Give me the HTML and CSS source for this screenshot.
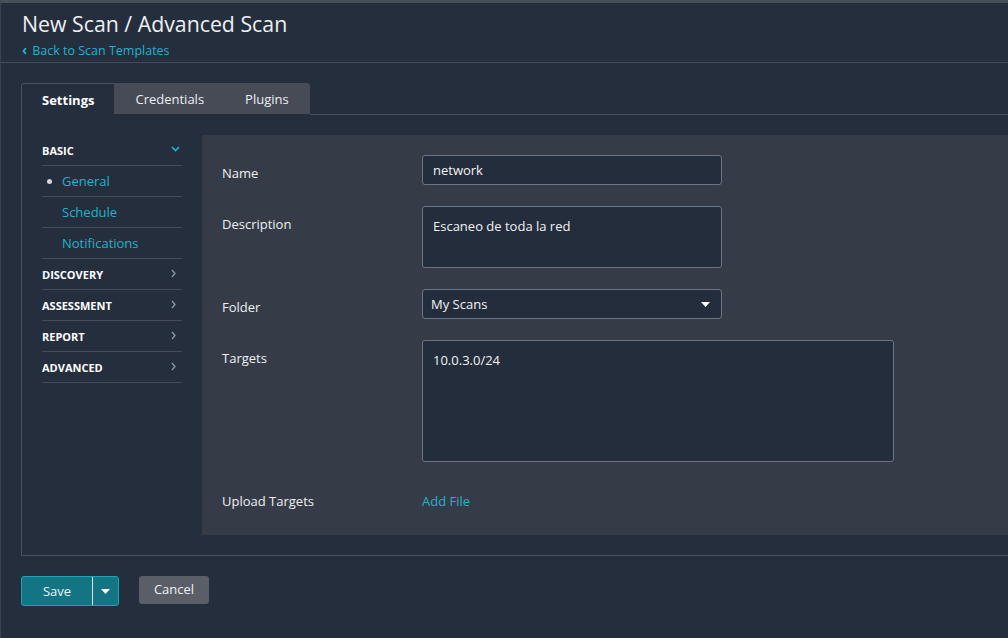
FILE: index.html
```html
<!DOCTYPE html>
<html>
<head>
<meta charset="utf-8">
<link rel="stylesheet" href="styles.css">
</head>
<body>
<header class="header">
  <h1 class="title">New Scan / Advanced Scan</h1>
  <a class="back"><span class="back-caret">&#8249;</span>Back to Scan Templates</a>
</header>
<main class="main">
  <div class="tabs">
    <div class="tab active">Settings</div>
    <div class="tab">Credentials</div>
    <div class="tab last">Plugins</div>
    <div class="tab-fill"></div>
  </div>
  <div class="content">
    <nav class="sidenav">
      <div class="nav-head">BASIC
        <svg class="chev-down" width="9" height="6" viewBox="0 0 9 6"><path d="M1 1 L4.5 4.5 L8 1" fill="none" stroke="#1fb3cc" stroke-width="1.6"/></svg>
      </div>
      <div class="nav-item current"><span class="dot"></span>General</div>
      <div class="nav-item">Schedule</div>
      <div class="nav-item">Notifications</div>
      <div class="nav-head">DISCOVERY<svg class="chev" width="5" height="9" viewBox="0 0 5 9"><path d="M1 1 L4 4.5 L1 8" fill="none" stroke="#8898ad" stroke-width="1.3"/></svg></div>
      <div class="nav-head">ASSESSMENT<svg class="chev" width="5" height="9" viewBox="0 0 5 9"><path d="M1 1 L4 4.5 L1 8" fill="none" stroke="#8898ad" stroke-width="1.3"/></svg></div>
      <div class="nav-head">REPORT<svg class="chev" width="5" height="9" viewBox="0 0 5 9"><path d="M1 1 L4 4.5 L1 8" fill="none" stroke="#8898ad" stroke-width="1.3"/></svg></div>
      <div class="nav-head">ADVANCED<svg class="chev" width="5" height="9" viewBox="0 0 5 9"><path d="M1 1 L4 4.5 L1 8" fill="none" stroke="#8898ad" stroke-width="1.3"/></svg></div>
    </nav>
    <section class="panel">
      <div class="row">
        <label class="label">Name</label>
        <div class="input">network</div>
      </div>
      <div class="row">
        <label class="label">Description</label>
        <div class="input textarea">Escaneo de toda la red</div>
      </div>
      <div class="row">
        <label class="label">Folder</label>
        <div class="input select">My Scans
          <svg class="caret" width="9" height="5" viewBox="0 0 9 5"><path d="M0 0 H9 L4.5 5 Z" fill="#ffffff"/></svg>
        </div>
      </div>
      <div class="row">
        <label class="label">Targets</label>
        <div class="input textarea big">10.0.3.0/24</div>
      </div>
      <div class="row upload">
        <label class="label">Upload Targets</label>
        <a class="addfile">Add File</a>
      </div>
    </section>
  </div>
  <div class="actions">
    <div class="save-group">
      <div class="save">Save</div>
      <div class="save-drop"><svg width="9" height="5" viewBox="0 0 9 5"><path d="M0 0 H9 L4.5 5 Z" fill="#ffffff"/></svg></div>
    </div>
    <div class="cancel">Cancel</div>
  </div>
</main>
</body>
</html>
```

FILE: styles.css
```css
* { box-sizing: border-box; }
html, body { margin: 0; padding: 0; }
body {
  width: 1008px;
  height: 638px;
  overflow: hidden;
  background: #252e3d;
  border-top: 3px solid #474f58;
  border-left: 1px solid #3a424f;
  font-family: "Open Sans", "Noto Sans", sans-serif;
  color: #e8ebef;
}
.header {
  height: 60px;
  padding: 6px 21px 0;
  border-bottom: 1px solid #444b56;
}
.title {
  margin: 0;
  font-size: 21.3px;
  line-height: 30px;
  font-weight: 400;
  color: #eef0f3;
}
.back {
  display: block;
  margin-top: 2px;
  font-size: 12.5px;
  line-height: 18px;
  height: 18px;
  color: #22b2cc;
}
.back-caret {
  font-weight: 700;
  font-size: 14px;
  line-height: 18px;
  margin-right: 5px;
}
.main {
  padding: 20px 0 0 20px;
}
.tabs {
  display: flex;
  height: 32px;
}
.tab {
  height: 31px;
  padding: 0 20px 0 21px;
  background: #464b55;
  font-size: 13px;
  line-height: 33px;
  color: #eceef1;
}
.tab.last { border-top-right-radius: 3px; padding-right: 21px; }
.tab.active {
  height: 32px;
  background: transparent;
  border-left: 1px solid #4a515c;
  border-top: 1px solid #4a515c;
  border-top-left-radius: 3px;
  padding: 0 20px 0 20px;
  line-height: 32px;
  font-weight: 700;
  font-size: 13px;
  color: #ffffff;
}
.tab-fill {
  flex: 1;
  border-bottom: 1px solid #4a515c;
}
.content {
  display: flex;
  border-left: 1px solid #4a515c;
  border-bottom: 1px solid #4a515c;
  padding: 20px 0 20px 20px;
}
.sidenav {
  width: 140px;
  flex: none;
  margin-right: 20px;
}
.nav-head, .nav-item {
  height: 31px;
  border-bottom: 1px solid #464c57;
  display: flex;
  align-items: center;
}
.nav-head {
  font-size: 11px;
  font-weight: 700;
  color: #ffffff;
  justify-content: space-between;
  padding-right: 2px;
  padding-top: 1px;
}
.nav-head .chev-down { margin-right: 0; margin-top: -3px; }
.nav-head .chev { margin-right: 4px; margin-top: -3px; }
.nav-item {
  font-size: 13px;
  color: #21b3cc;
  padding-left: 20px;
  position: relative;
}
.dot {
  position: absolute;
  left: 5px;
  top: 13px;
  width: 5px;
  height: 5px;
  border-radius: 50%;
  background: #d0d3d8;
}
.panel {
  flex: 1;
  min-width: 0;
  background: #353c48;
  padding: 20px 20px 19px;
  height: 400px;
}
.row {
  display: flex;
  align-items: flex-start;
  margin-bottom: 21px;
}
.label {
  width: 200px;
  flex: none;
  padding-top: 9px;
  font-size: 13px;
  line-height: 18px;
  color: #eef0f3;
}
.input {
  width: 300px;
  height: 30px;
  background: #242d3c;
  border: 1px solid #6b7587;
  border-radius: 3px;
  padding: 0 10px;
  font-size: 13px;
  line-height: 28px;
  color: #f2f3f5;
}
.textarea {
  height: 62px;
  line-height: 18px;
  padding-top: 10px;
}
.textarea.big {
  width: 472px;
  height: 122px;
}
.select {
  display: flex;
  align-items: center;
  justify-content: space-between;
  padding: 0 11px 0 8px;
  line-height: 28px;
}
.caret { margin-top: 1px; }
.row.upload {
  margin-bottom: 0;
  align-items: center;
  height: 36px;
}
.row.upload .label { padding-top: 0; }
.addfile {
  font-size: 13px;
  color: #22b2cc;
}
.actions {
  display: flex;
  align-items: flex-start;
  margin-top: 20px;
}
.save-group {
  display: flex;
  height: 30px;
  border: 1px solid #1aa6b8;
  border-radius: 3px;
  background: #137584;
  overflow: hidden;
}
.save {
  width: 71px;
  font-size: 13px;
  line-height: 28px;
  text-align: center;
  color: #f0f3f5;
  border-right: 1px solid #d8e6ea;
}
.save-drop {
  width: 25px;
  display: flex;
  align-items: center;
  justify-content: center;
}
.cancel {
  margin-left: 20px;
  width: 70px;
  height: 28px;
  border-radius: 3px;
  background: #5a5e67;
  font-size: 13px;
  line-height: 27px;
  text-align: center;
  color: #eef0f3;
}
```
